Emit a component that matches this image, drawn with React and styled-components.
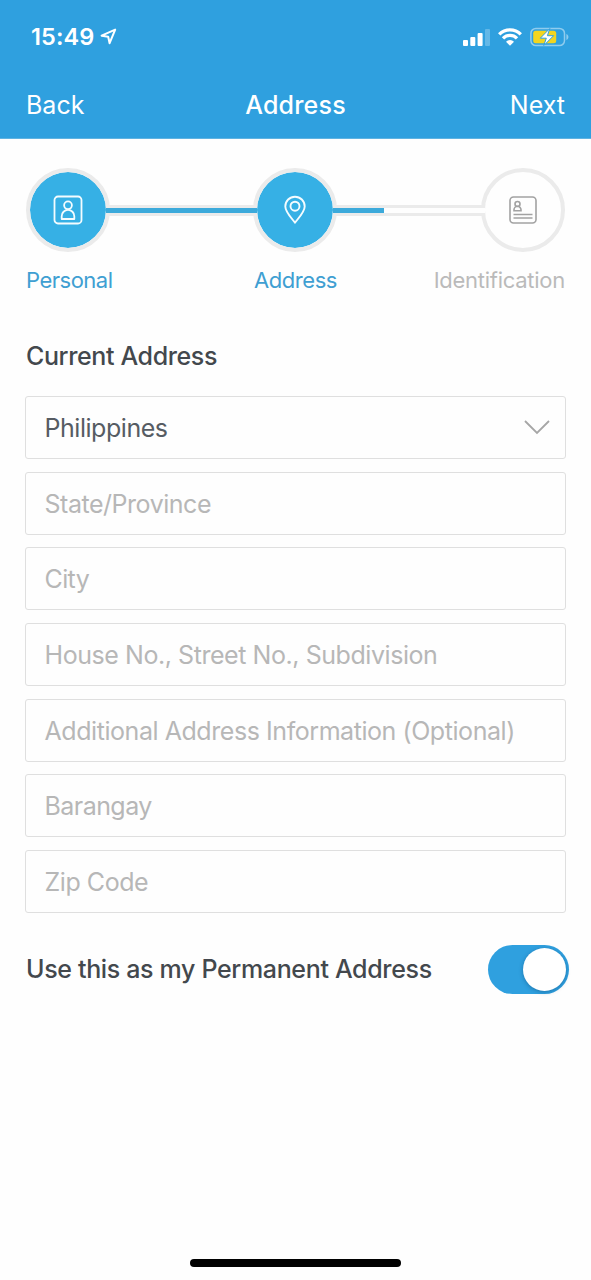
import React from 'react';
import styled, { createGlobalStyle } from 'styled-components';


///////////styled components///////////////
//header blue #2fa0df, step blue #36b0e5

const GlobalStyle = createGlobalStyle`
  * {
    box-sizing: border-box;
  }
  body {
    margin: 0;
    background-color: #fefefe;
  }
`;

const Screen = styled.div`
  display: flex;
  flex-direction: column;
  width: 591px;
  height: 1280px;
  overflow: hidden;
  background-color: #fefefe;
  color: #43484d;
  font-family: Inter, 'Liberation Sans', Arial, sans-serif;
  font-size: 25px;
`;

const Header = styled.header`
  height: 139px;
  background-color: #2fa0df;
  border-bottom: 1px solid #5fb3e2;
  color: white;
`;

const StatusBar = styled.div`
  display: flex;
  align-items: center;
  justify-content: space-between;
  height: 73px;
  padding: 0 22px 0 31px;
`;

const Clock = styled.div`
  display: flex;
  align-items: center;
  gap: 6px;
  font-size: 23.5px;
  font-weight: 600;
  letter-spacing: ${props => props.$spacing}px;
`;

const StatusIcons = styled.div`
  display: flex;
  align-items: center;
  gap: 8px;
`;

const NavBar = styled.nav`
  display: grid;
  grid-template-columns: 1fr auto 1fr;
  align-items: center;
  height: 64px;
  padding: 0 26px;
`;

const NavButton = styled.button`
  justify-self: ${props => props.$side};
  padding: 0;
  border: none;
  background: none;
  color: white;
  font: inherit;
  letter-spacing: ${props => props.$spacing}px;
`;

const Title = styled.h1`
  margin: 0;
  font-size: 25px;
  font-weight: 500;
  letter-spacing: ${props => props.$spacing}px;
`;

const Stepper = styled.div`
  display: flex;
  align-items: center;
  margin-top: 29px;
  padding: 0 26.5px 0 25.5px;
`;

const StepCircle = styled.div`
  display: flex;
  flex: none;
  align-items: center;
  justify-content: center;
  width: 84px;
  height: 84px;
  border: 4px solid #ebebeb;
  border-radius: 50%;
  background-color: ${props => props.$done ? '#36b0e5' : '#fefefe'};
  background-clip: padding-box;
  color: ${props => props.$done ? '#f4fcff' : '#a2a2a2'};
`;

const Connector = styled.div`
  flex: 1;
  height: 11px;
  margin: 0 -4px;
  border: solid #ebebeb;
  border-width: 3px 0;
  background-color: #fefefe;
  z-index: 1;
`;

const ConnectorFill = styled.div`
  height: 100%;
  background-color: #3caadb;
`;

const StepLabels = styled.div`
  display: grid;
  grid-template-columns: 1fr auto 1fr;
  margin-top: 14px;
  padding: 0 26px;
  font-size: 22px;
  line-height: 28px;
`;

const StepLabel = styled.span`
  justify-self: ${props => props.$side};
  color: ${props => props.$done ? '#3f9fd2' : '#bababa'};
  letter-spacing: ${props => props.$spacing}px;
`;

const SectionTitle = styled.h2`
  margin: 46px 26px 0;
  font-size: 25px;
  font-weight: 500;
  line-height: 32px;
  letter-spacing: ${props => props.$spacing}px;
`;

const Fields = styled.div`
  display: flex;
  flex-direction: column;
  gap: 12.65px;
  padding: 24px 25px 0;
`;

const Field = styled.div`
  display: flex;
  align-items: center;
  justify-content: space-between;
  height: 63px;
  padding: ${props => props.$filled ? '0' : '1px'} 15px 0 18.5px;
  border: 1px solid #dfdfdf;
  border-radius: 3px;
  color: ${props => props.$filled ? '#565c63' : '#b7b7b7'};
  letter-spacing: ${props => props.$spacing}px;
  white-space: nowrap;
`;

const PermanentRow = styled.div`
  display: flex;
  align-items: center;
  justify-content: space-between;
  margin-top: 32px;
  padding: 0 22px 0 26px;
  font-weight: 500;
  line-height: 32px;
  letter-spacing: ${props => props.$spacing}px;
`;

const Toggle = styled.div`
  display: flex;
  justify-content: flex-end;
  width: 81px;
  height: 49px;
  padding: 3px;
  border-radius: 25px;
  background-color: #2fa0df;
`;

const Knob = styled.div`
  width: 43px;
  height: 43px;
  border-radius: 50%;
  background-color: white;
  box-shadow: 0 1px 4px rgba(0, 40, 80, 0.35);
`;

const HomeIndicator = styled.div`
  width: 211px;
  height: 8px;
  margin: auto auto 13px;
  border-radius: 4px;
  background-color: #000;
`;

///////////icons///////////////

const LocationIcon = () => (
  <svg width="17" height="17" viewBox="0 0 17 17" fill="none" stroke="white" strokeWidth="2" strokeLinejoin="round">
    <path d="M15.2 1.6 1.6 7.7 8.2 8.7 9.6 15.2Z" />
  </svg>
);

const SignalIcon = () => (
  <svg width="27" height="18" viewBox="0 0 27 18" fill="white">
    <rect x="0" y="12" width="5" height="6" rx="1" />
    <rect x="7.3" y="9" width="5" height="9" rx="1" />
    <rect x="14.6" y="5" width="5" height="13" rx="1" />
    <rect x="22" y="1" width="5" height="17" rx="1" opacity="0.25" />
  </svg>
);

const WifiIcon = () => (
  <svg width="24" height="18" viewBox="0 0 24 18" fill="none" stroke="white" strokeWidth="3.3">
    <path d="M1.2 6.3A15.2 15.2 0 0 1 22.8 6.3" />
    <path d="M5 10.4A9.8 9.8 0 0 1 19 10.4" />
    <path d="M12 17.8 8 13.8A5.6 5.6 0 0 1 16 13.8Z" fill="white" stroke="none" />
  </svg>
);

const BatteryIcon = () => (
  <svg width="39" height="20" viewBox="0 0 39 20">
    <rect x="0.9" y="1.4" width="33.6" height="17.2" rx="5" fill="none" stroke="#8fccee" strokeWidth="1.5" />
    <path d="M36.4 7v6c1.3-.5 2-1.6 2-3s-.7-2.5-2-3Z" fill="#8fccee" />
    <rect x="3.2" y="3.8" width="23" height="12.4" rx="2.5" fill="#f2d51f" />
    <path d="M19.8 1.5 10.3 11.2h6L13.8 18.5 23.6 8.7h-6.2Z" fill="white" stroke="#2fa0df" strokeWidth="1" />
  </svg>
);

const PersonalIcon = () => (
  <svg width="30" height="30" viewBox="0 0 30 30" fill="none" stroke="currentColor" strokeWidth="1.8">
    <rect x="1.5" y="1.5" width="27" height="27" rx="3.5" />
    <circle cx="15" cy="10.3" r="3.9" />
    <path d="M8.7 24v-2.8a6.3 6.3 0 0 1 12.6 0V24Z" strokeLinejoin="round" />
  </svg>
);

const PinIcon = () => (
  <svg width="22" height="30" viewBox="0 0 22 30" fill="none" stroke="currentColor" strokeWidth="1.9" strokeLinejoin="round">
    <path d="M11 27.7C8 23.6 1.3 16.8 1.3 11.4a9.7 9.7 0 0 1 19.4 0C20.7 16.8 14 23.6 11 27.7Z" />
    <circle cx="11" cy="11.2" r="4.5" />
  </svg>
);

const IdCardIcon = () => (
  <svg width="28" height="28" viewBox="0 0 28 28" fill="none" stroke="currentColor" strokeWidth="1.6">
    <rect x="1" y="1" width="26" height="26" rx="3.5" />
    <circle cx="8.5" cy="8" r="2.5" />
    <path d="M5 14.8v-1a3.5 3.5 0 0 1 7 0V14.800Z" />
    <path d="M4.5 18.5h19M4.5 22h19" />
  </svg>
);

const ChevronIcon = () => (
  <svg width="26" height="15" viewBox="0 0 26 15" fill="none" stroke="#a6a6a6" strokeWidth="1.8">
    <path d="M1 1 13 13 25 1" />
  </svg>
);

///////////////////////////////////////////
const fields = [
  { text: 'Philippines', filled: true, spacing: -0.46 },
  { text: 'State/Province', spacing: -0.47 },
  { text: 'City', spacing: -0.6 },
  { text: 'House No., Street No., Subdivision', spacing: -0.44 },
  { text: 'Additional Address Information (Optional)', spacing: -0.44 },
  { text: 'Barangay', spacing: -0.55 },
  { text: 'Zip Code', spacing: -0.45 }
];

const App = () => (
  <Screen>
    <GlobalStyle />
    <Header>
      <StatusBar>
        <Clock $spacing={0.1}>
          <span>15:49</span>
          <LocationIcon />
        </Clock>
        <StatusIcons>
          <SignalIcon />
          <WifiIcon />
          <BatteryIcon />
        </StatusIcons>
      </StatusBar>
      <NavBar>
        <NavButton $side="start" $spacing={0}>Back</NavButton>
        <Title $spacing={0.2}>Address</Title>
        <NavButton $side="end" $spacing={0}>Next</NavButton>
      </NavBar>
    </Header>

    <Stepper>
      <StepCircle $done><PersonalIcon /></StepCircle>
      <Connector><ConnectorFill style={{ width: '100%' }} /></Connector>
      <StepCircle $done><PinIcon /></StepCircle>
      <Connector><ConnectorFill style={{ width: '33.5%' }} /></Connector>
      <StepCircle><IdCardIcon /></StepCircle>
    </Stepper>
    <StepLabels>
      <StepLabel $done $side="start" $spacing={-0.5}>Personal</StepLabel>
      <StepLabel $done $side="center" $spacing={-0.45}>Address</StepLabel>
      <StepLabel $side="end" $spacing={-0.27}>Identification</StepLabel>
    </StepLabels>

    <SectionTitle $spacing={-0.38}>Current Address</SectionTitle>
    <Fields>
      {fields.map(field => (
        <Field key={field.text} $filled={field.filled} $spacing={field.spacing}>
          <span>{field.text}</span>
          {field.filled && <ChevronIcon />}
        </Field>
      ))}
    </Fields>

    <PermanentRow $spacing={-0.34}>
      <span>Use this as my Permanent Address</span>
      <Toggle><Knob /></Toggle>
    </PermanentRow>
    <HomeIndicator />
  </Screen>
);

export default App;
